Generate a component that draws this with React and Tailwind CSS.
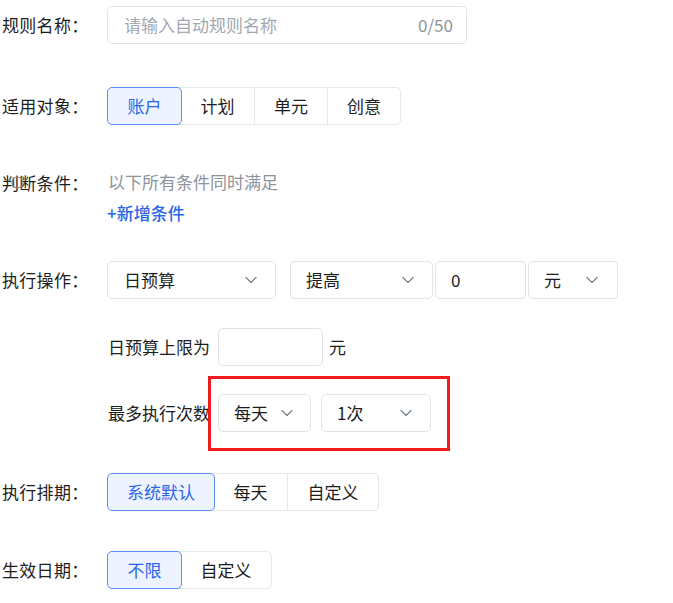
import React from 'react'

const font = { fontFamily: '"Noto Sans CJK SC", "Noto Sans", sans-serif' }

function Chevron() {
  return (
    <svg width="12" height="8" viewBox="0 0 12 8" fill="none" className="shrink-0">
      <path d="M1 1.5 L6 6.5 L11 1.5" stroke="#7b8494" strokeWidth="1.3" strokeLinecap="round" strokeLinejoin="round" />
    </svg>
  )
}

function Select({ value, className = '', pad = 'pl-4 pr-5' }) {
  return (
    <div className={`h-[38px] flex items-center justify-between rounded-[5px] border border-[#dfe3ea] bg-white ${pad} ${className}`}>
      <span className="text-[17px] text-[#1d1d1d]">{value}</span>
      <Chevron />
    </div>
  )
}

function Segmented({ items, widths, active = 0 }) {
  return (
    <div className="flex h-[38px] rounded-[5px] border border-[#e3e7ee] bg-white">
      {items.map((it, i) => (
        <div
          key={it}
          style={{ width: widths[i] }}
          className={
            i === active
              ? 'flex items-center justify-center -m-px h-[38px] rounded-[5px] border border-[#5b8ef5] bg-[#eef4ff] text-[#2b66e8] text-[17px]'
              : `flex items-center justify-center text-[17px] text-[#1d1d1d] ${i > active + 1 ? 'border-l border-[#e3e7ee]' : ''}`
          }
        >
          {it}
        </div>
      ))}
    </div>
  )
}

function Label({ children }) {
  return <div className="w-[107px] shrink-0 pl-[2px] text-[17px] text-[#1d1d1d] tracking-[0.3px]">{children}</div>
}

export default function App() {
  return (
    <div className="relative w-[673px] h-[603px] bg-white overflow-hidden" style={font}>
      <div className="flex flex-col pt-[6px]">
        {/* rule name */}
        <div className="flex items-center">
          <Label>规则名称：</Label>
          <div className="w-[360px] h-[38px] flex items-center justify-between rounded-[5px] border border-[#dfe3ea] pl-4 pr-[13px]">
            <span className="text-[17px] text-[#a3a8b1]">请输入自动规则名称</span>
            <span className="text-[17px] text-[#8d939c]">0/50</span>
          </div>
        </div>

        {/* target */}
        <div className="flex items-center mt-[43px]">
          <Label>适用对象：</Label>
          <Segmented items={['账户', '计划', '单元', '创意']} widths={[75, 73, 73, 73]} />
        </div>

        {/* conditions */}
        <div className="flex mt-[45px]">
          <div className="relative w-[107px] shrink-0">
            <Label>判断条件：</Label>
            <svg className="absolute left-[11px] top-[6px]" width="13" height="13" viewBox="0 0 13 13" fill="none">
              <circle cx="6.5" cy="6.5" r="5.5" stroke="#7d838c" strokeWidth="1.2" />
            </svg>
          </div>
          <div className="flex flex-col">
            <span className="h-[24px] leading-[24px] text-[17px] text-[#8d939c] pl-px">以下所有条件同时满足</span>
            <span className="h-[24px] leading-[24px] mt-[7px] text-[17px] font-medium text-[#2b66e8]">+新增条件</span>
          </div>
        </div>

        {/* action */}
        <div className="flex items-center mt-[36px]">
          <Label>执行操作：</Label>
          <Select value="日预算" className="w-[169px]" pad="pl-4 pr-[18px]" />
          <Select value="提高" className="w-[143px] ml-[14px]" pad="pl-[15px] pr-[18px]" />
          <div className="w-[91px] h-[38px] ml-[2px] flex items-center rounded-[5px] border border-[#dfe3ea] pl-[15px] text-[17px] text-[#1d1d1d]">0</div>
          <Select value="元" className="w-[90px] ml-[2px]" pad="pl-[15px] pr-[19px]" />
        </div>

        {/* limit */}
        <div className="flex items-center mt-[29px] pl-[108px]">
          <span className="text-[17px] text-[#1d1d1d] w-[110px]">日预算上限为</span>
          <div className="w-[105px] h-[38px] rounded-[5px] border border-[#dfe3ea]" />
          <span className="text-[17px] text-[#1d1d1d] ml-[6px]">元</span>
        </div>

        {/* max times */}
        <div className="flex items-center mt-[28px] pl-[108px]">
          <span className="text-[17px] text-[#1d1d1d] w-[110px] whitespace-nowrap">最多执行次数</span>
          <Select value="每天" className="w-[93px]" pad="pl-[15px] pr-[17px]" />
          <Select value="1次" className="w-[110px] ml-[10px]" pad="pl-[15px] pr-[18px]" />
        </div>

        {/* schedule */}
        <div className="flex items-center mt-[41px]">
          <Label>执行排期：</Label>
          <Segmented items={['系统默认', '每天', '自定义']} widths={[108, 73, 91]} />
        </div>

        {/* date */}
        <div className="flex items-center mt-[40px]">
          <Label>生效日期：</Label>
          <Segmented items={['不限', '自定义']} widths={[75, 90]} />
        </div>
      </div>

      {/* annotation */}
      <div className="absolute left-[208px] top-[376px] w-[242px] h-[75px] border-[3px] border-[#ee1c1c]" />
    </div>
  )
}
